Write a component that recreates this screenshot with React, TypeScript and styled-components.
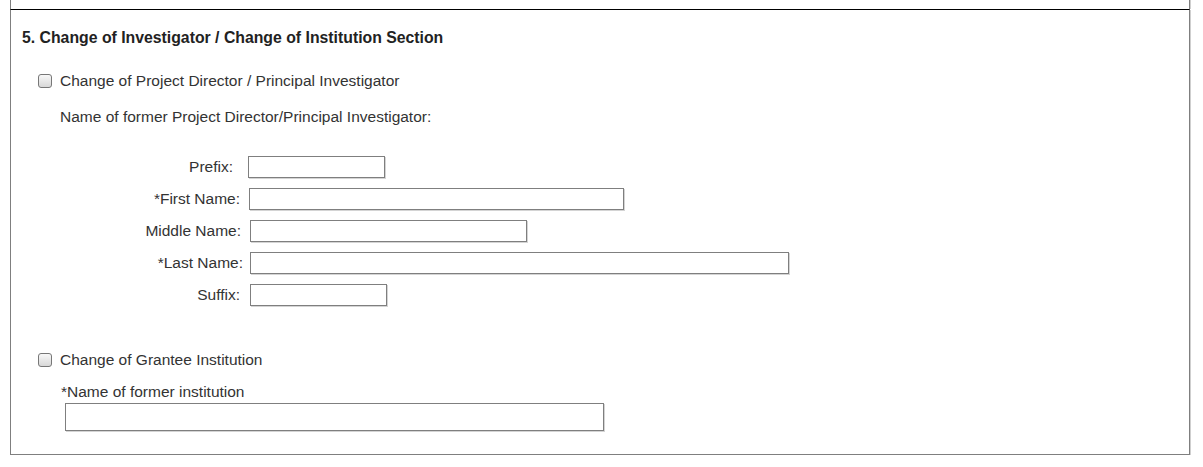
import styled, { createGlobalStyle } from "styled-components";

const Global = createGlobalStyle`
  html, body {
    margin: 0;
    padding: 0;
    background: #fff;
  }
  body {
    font-family: "Liberation Sans", Arial, sans-serif;
    font-size: 15.5px;
    color: #333;
  }
`;

// labelEnd / inputStart are measured from the page's left edge
const nameFields = [
  { label: "Prefix:", width: 137, labelEnd: 233, inputStart: 248 },
  { label: "*First Name:", width: 375, labelEnd: 240, inputStart: 249 },
  { label: "Middle Name:", width: 277, labelEnd: 241, inputStart: 250 },
  { label: "*Last Name:", width: 539, labelEnd: 243, inputStart: 250 },
  { label: "Suffix:", width: 137, labelEnd: 240, inputStart: 250 },
];

const CONTENT_LEFT = 22;

const App = () => {
  return (
    <Page>
      <Global />
      <PrevSection />
      <Section>
        <Title>5. Change of Investigator / Change of Institution Section</Title>

        <CheckRow>
          <Check type="checkbox" />
          <CheckText>Change of Project Director / Principal Investigator</CheckText>
        </CheckRow>

        <Note>Name of former Project Director/Principal Investigator:</Note>

        <NameGrid>
          {nameFields.map((f) => (
            <FieldRow key={f.label}>
              <FieldLabel
                w={f.labelEnd - CONTENT_LEFT}
                gap={f.inputStart - f.labelEnd}
              >
                {f.label}
              </FieldLabel>
              <TextBox w={f.width} />
            </FieldRow>
          ))}
        </NameGrid>

        <CheckRow top={46}>
          <Check type="checkbox" />
          <CheckText>Change of Grantee Institution</CheckText>
        </CheckRow>

        <Institution>
          <InstLabel>*Name of former institution</InstLabel>
          <TextBox w={539} h={28} />
        </Institution>
      </Section>
    </Page>
  );
};

export default App;

const Page = styled.div`
  padding-left: 10px;
  width: 1180px;
`;

const PrevSection = styled.div`
  height: 9px;
  border-left: 1px solid #7f7f7f;
  border-right: 1px solid #7f7f7f;
  box-shadow: 1px 0 0 #cfcfcf;
`;

const Section = styled.div`
  border-top: 1px solid #000;
  border-left: 1px solid #7f7f7f;
  border-right: 1px solid #7f7f7f;
  border-bottom: 1px solid #7f7f7f;
  box-shadow: 1px 1px 0 #cfcfcf;
  padding: 20px 0 23px 11px;
  line-height: 16px;
`;

const Title = styled.div`
  font-weight: bold;
  font-size: 15.8px;
  color: #222;
`;

const CheckRow = styled.label<{ top?: number }>`
  display: flex;
  align-items: center;
  margin-top: ${({ top }) => top ?? 27}px;
  padding-left: 16px;
  height: 16px;
`;

const Check = styled.input`
  appearance: none;
  -webkit-appearance: none;
  margin: 0 8px 0 0;
  width: 14px;
  height: 14px;
  border: 1px solid #777;
  border-radius: 3px;
  background: linear-gradient(#f8f8f8, #d8d8d8);
  box-sizing: border-box;
`;

const CheckText = styled.span`
  color: #333;
`;

const Note = styled.div`
  margin-top: 20px;
  padding-left: 38px;
`;

const NameGrid = styled.div`
  display: flex;
  flex-direction: column;
  gap: 10px;
  margin-top: 31px;
`;

const FieldRow = styled.div`
  display: flex;
  align-items: center;
  height: 22px;
`;

const FieldLabel = styled.span<{ w: number; gap: number }>`
  width: ${({ w }) => w}px;
  margin-right: ${({ gap }) => gap}px;
  text-align: right;
  white-space: nowrap;
`;

const TextBox = styled.input<{ w: number; h?: number }>`
  width: ${({ w }) => w}px;
  height: ${({ h }) => h ?? 22}px;
  box-sizing: border-box;
  border: 1px solid #7f7f7f;
  box-shadow: 1px 1px 0 #d4d4d4;
  background: #fff;
  padding: 0 3px;
  margin: 0;
  outline: none;
`;

const Institution = styled.div`
  margin-top: 16px;
  padding-left: 39px;
  display: flex;
  flex-direction: column;
  align-items: flex-start;
  gap: 3px;

  & > input {
    margin-left: 4px;
  }
`;

const InstLabel = styled.span`
  color: #333;
`;
